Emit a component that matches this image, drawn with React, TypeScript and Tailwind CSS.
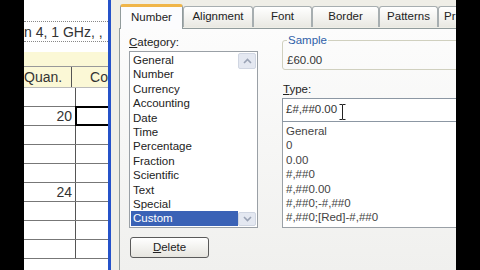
const categories = [
  "General",
  "Number",
  "Currency",
  "Accounting",
  "Date",
  "Time",
  "Percentage",
  "Fraction",
  "Scientific",
  "Text",
  "Special",
  "Custom",
];

const types = ["General", "0", "0.00", "#,##0", "#,##0.00", "#,##0;-#,##0", "#,##0;[Red]-#,##0"];

const tabs = [
  { label: "Number", w: "w-[63px]", active: true },
  { label: "Alignment", w: "w-[70px]" },
  { label: "Font", w: "w-[59px]" },
  { label: "Border", w: "w-[67px]" },
  { label: "Patterns", w: "w-[59px]" },
];

const Chevron = ({ up }: { up?: boolean }) => (
  <svg width="9" height="6" viewBox="0 0 9 6">
    <path d={up ? "M1 5 L4.5 1.5 L8 5" : "M1 1 L4.5 4.5 L8 1"} fill="none" stroke="#9aa3b5" strokeWidth="1.6" />
  </svg>
);

const Sheet = () => (
  <div className="w-[84px] h-full bg-white flex flex-col text-[14px] text-[#333] overflow-hidden">
    <div className="h-[22px] shrink-0 border-b border-dotted border-[#888]" />
    <div className="h-[20px] shrink-0 leading-[20px] whitespace-nowrap border-b border-dotted border-[#888]">
      n 4, 1 GHz, ,
    </div>
    <div className="h-[10px] shrink-0" />
    <div className="h-[15px] shrink-0 bg-[#fbf8d6] border-b border-[#999]" />
    <div className="h-[21px] shrink-0 bg-[#fbf8d6] flex border-b border-[#bbb]">
      <div className="w-[52px] border-r border-[#555] leading-[21px]">Quan.</div>
      <div className="flex-1 pl-[18px] leading-[21px]">Co</div>
    </div>
    {["", "20", "", "", "", "24", "", "", ""].map((v, i) => (
      <div key={i} className="h-[19px] shrink-0 flex border-b border-[#777]">
        <div className="w-[52px] border-r border-[#555] text-right pr-[3px] leading-[19px]">{v}</div>
        <div className="flex-1 relative">
          {i === 1 && <div className="absolute -top-[1px] -left-[1px] -right-[4px] -bottom-[1px] border-2 border-black" />}
        </div>
      </div>
    ))}
  </div>
);

export default function App() {
  return (
    <div className="w-[480px] h-[270px] flex bg-black overflow-hidden font-['Liberation_Sans',Arial,sans-serif]">
      <div className="w-[24px] shrink-0 bg-black" />
      <Sheet />
      <div className="w-[348px] shrink-0 h-full flex flex-col border-l-[3px] border-[#2552c9] bg-[#efeee7] overflow-hidden">
        {/* tabs */}
        <div className="h-[28px] shrink-0 flex items-end pl-[9px] text-[11.5px] text-[#222] relative z-10">
          {tabs.map((t) =>
            t.active ? (
              <div
                key={t.label}
                className={`${t.w} shrink-0 h-[25px] -mb-px border-t-[3px] border-t-[#f0b548] border-x border-x-[#919b9c] rounded-t-[3px] bg-[#fcfcfe] flex items-center justify-center`}
              >
                {t.label}
              </div>
            ) : (
              <div
                key={t.label}
                className={`${t.w} shrink-0 h-[21px] mb-px border-t border-x border-[#a7aeb0] rounded-t-[3px] bg-gradient-to-b from-white to-[#e9e8e2] flex items-center justify-center whitespace-nowrap`}
              >
                {t.label}
              </div>
            )
          )}
          <div className="flex-1 h-[21px] mb-px border-t border-l border-[#a7aeb0] rounded-tl-[3px] bg-gradient-to-b from-white to-[#e9e8e2] flex items-center pl-[5px]">
            Pr
          </div>
        </div>
        {/* panel */}
        <div className="flex-1 ml-[8px] border-l border-t border-[#919b9c] bg-gradient-to-b from-[#fcfcfc] to-[#f0f0ee] flex text-[11.5px] text-[#222]">
          <div className="w-[138px] shrink-0 pl-[9px] pt-[6px] flex flex-col">
            <div className="h-[14px] leading-[14px]">
              <span className="underline">C</span>ategory:
            </div>
            <div className="mt-[2px] w-[129px] h-[177px] border border-[#9aa0a6] bg-white flex">
              <div className="w-[108px] pt-[1px] pl-[1px] leading-[14.4px]">
                {categories.map((c) =>
                  c === "Custom" ? (
                    <div key={c} className="bg-[#3a62b6] text-white pl-[2px]">{c}</div>
                  ) : (
                    <div key={c} className="pl-[2px]">{c}</div>
                  )
                )}
              </div>
              <div className="flex-1 flex flex-col justify-between py-[1px] pr-[1px]">
                <div className="h-[16px] rounded-[2px] bg-[#e4e8f1] border border-[#d0d6e2] flex items-center justify-center">
                  <Chevron up />
                </div>
                <div className="h-[14px] rounded-[2px] bg-[#e4e8f1] border border-[#d0d6e2] flex items-center justify-center">
                  <Chevron />
                </div>
              </div>
            </div>
            <button className="mt-[9px] ml-[1px] w-[79px] h-[21px] rounded-[3px] border border-[#5a5a5a] bg-gradient-to-b from-white to-[#e6e5df] text-[11.5px] text-[#222]">
              <span className="underline">D</span>elete
            </button>
          </div>
          <div className="w-[230px] shrink-0 ml-[24px] flex flex-col">
            <fieldset className="mt-[4px] border border-[#d0d0bf] rounded-[3px] pl-[4px] pb-[2px]">
              <legend className="px-[1px] leading-[14px] text-[#2f5fa8]">Sample</legend>
              <div className="mt-[6px] leading-[14px] text-[#333]">£60.00</div>
            </fieldset>
            <div className="mt-[12px] h-[14px] leading-[14px] pl-[1px]">
              <span className="underline">T</span>ype:
            </div>
            <div className="mt-[2px] h-[24px] border border-[#8c97a3] bg-white flex items-center pl-[3px] relative text-[#333]">
              £#,##0.00
              <svg className="absolute left-[56px] top-[5px]" width="7" height="16" viewBox="0 0 7 16">
                <path d="M0.5 0.5 H3 M3.5 0.5 H6.5 M3.5 0.5 V15.5 M0.5 15.5 H3 M3.5 15.5 H6.5" fill="none" stroke="#222" strokeWidth="1" />
              </svg>
            </div>
            <div className="h-[106px] border border-t-0 border-[#9aa0a6] bg-white pt-[2px] pl-[3px] leading-[14.4px] text-[#444]">
              {types.map((t) => (
                <div key={t}>{t}</div>
              ))}
            </div>
          </div>
        </div>
      </div>
      <div className="w-[24px] shrink-0 bg-black" />
    </div>
  );
}
